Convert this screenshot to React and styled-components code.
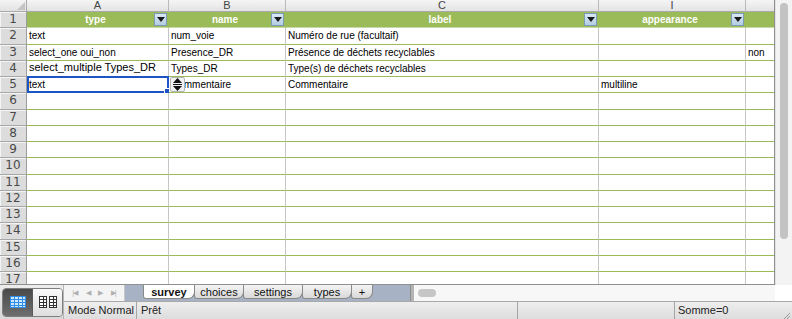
import React from 'react';
import styled, { createGlobalStyle } from 'styled-components';

const GlobalStyle = createGlobalStyle`
  html, body {
    margin: 0;
    padding: 0;
    background: #ffffff;
  }
  body {
    width: 792px;
    height: 319px;
    overflow: hidden;
    font-family: "Liberation Sans", Arial, sans-serif;
  }
`;

const columns = [
  { letter: 'A', title: 'type', filter: true },
  { letter: 'B', title: 'name', filter: true },
  { letter: 'C', title: 'label', filter: true },
  { letter: 'I', title: 'appearance', filter: true },
  { letter: '', title: '', filter: false },
];

const bodyRows = [
  ['text', 'num_voie', 'Numéro de rue (facultaif)', '', ''],
  ['select_one oui_non', 'Presence_DR', 'Présence de déchets recyclables', '', 'non'],
  ['select_multiple Types_DR', 'Types_DR', 'Type(s) de déchets recyclables', '', ''],
  ['text', 'Commentaire', 'Commentaire', 'multiline', ''],
];

const tabs = [
  { name: 'survey', width: 52, active: true },
  { name: 'choices', width: 50 },
  { name: 'settings', width: 60 },
  { name: 'types', width: 50 },
];

function FilterButton() {
  return (
    <Filter>
      <svg width="8" height="5" viewBox="0 0 8 5">
        <path d="M0 0 L8 0 L4 5 Z" fill="#1a1a1a" />
      </svg>
    </Filter>
  );
}

function ResizeHint() {
  return (
    <Hint>
      <svg width="11" height="13" viewBox="0 0 11 13">
        <path d="M5.5 0 L10 5 L1 5 Z" fill="#111" />
        <rect x="1" y="6" width="9" height="1" fill="#111" />
        <path d="M5.5 13 L10 8 L1 8 Z" fill="#111" />
      </svg>
    </Hint>
  );
}

function NormalViewIcon() {
  return (
    <svg width="16" height="12" viewBox="0 0 16 12">
      <rect x="0.5" y="0.5" width="15" height="11" fill="#cfe6ff" stroke="#2f8ee8" />
      {[3, 6, 9].map(y => <rect key={'h' + y} x="1" y={y} width="14" height="1" fill="#2f8ee8" />)}
      {[4, 8, 12].map(x => <rect key={'v' + x} x={x} y="1" width="1" height="10" fill="#2f8ee8" />)}
    </svg>
  );
}

function LayoutViewIcon() {
  return (
    <svg width="18" height="12" viewBox="0 0 18 12">
      {[0, 10].map(ox => (
        <g key={ox}>
          <rect x={ox + 0.5} y="0.5" width="7" height="11" fill="#fff" stroke="#333" />
          <rect x={ox + 4} y="1" width="1" height="10" fill="#333" />
          {[3, 6, 9].map(y => <rect key={y} x={ox + 1} y={y} width="6" height="1" fill="#333" />)}
        </g>
      ))}
    </svg>
  );
}

export default function App() {
  return (
    <>
      <GlobalStyle />
      <Window>
        <MainArea>
          <Sheet>
            <Corner />
            {columns.map((c, i) => (
              <ColHeader key={i}>{c.letter}</ColHeader>
            ))}

            <RowHeader>1</RowHeader>
            {columns.map((c, i) => (
              <TitleCell key={i}>
                <span>{c.title}</span>
                {c.filter && <FilterButton />}
              </TitleCell>
            ))}

            {bodyRows.map((row, r) => (
              <React.Fragment key={r}>
                <RowHeader>{r + 2}</RowHeader>
                {row.map((val, ci) => (
                  <Cell key={ci} $big={r === 2 && ci === 0}>
                    {val}
                    {r === 3 && ci === 0 && (
                      <Selection>
                        <Handle />
                      </Selection>
                    )}
                    {r === 3 && ci === 1 && <ResizeHint />}
                  </Cell>
                ))}
              </React.Fragment>
            ))}

            {Array.from({ length: 12 }, (_, k) => (
              <React.Fragment key={'e' + k}>
                <RowHeader>{k + 6}</RowHeader>
                {columns.map((c, ci) => (
                  <Cell key={ci} />
                ))}
              </React.Fragment>
            ))}
          </Sheet>
          <VScroll>
            <VThumb />
          </VScroll>
        </MainArea>

        <Bottom>
          <ViewSwitch>
            <ViewGroup>
              <ViewButton $pressed>
                <NormalViewIcon />
              </ViewButton>
              <ViewButton>
                <LayoutViewIcon />
              </ViewButton>
            </ViewGroup>
          </ViewSwitch>
          <BottomRight>
            <TabRow>
              <TabNav>
                <NavGlyph>|◀</NavGlyph>
                <NavGlyph>◀</NavGlyph>
                <NavGlyph>▶</NavGlyph>
                <NavGlyph>▶|</NavGlyph>
              </TabNav>
              <TabStrip>
                {tabs.map(t => (
                  <Tab key={t.name} $active={t.active} style={{ width: t.width }}>
                    {t.name}
                  </Tab>
                ))}
                <Tab style={{ width: 22 }}>+</Tab>
              </TabStrip>
              <TabSplitter />
              <HScroll>
                <HThumb />
              </HScroll>
              <ScrollCorner />
            </TabRow>
            <StatusBar>
              <StatusItem $w={73}>Mode Normal</StatusItem>
              <StatusItem $w={381}>Prêt</StatusItem>
              <StatusItem $w={157} />
              <StatusItem $w={117} $last>
                Somme=0
                <Grip>
                  <svg width="10" height="10" viewBox="0 0 10 10">
                    <path d="M9 2 L2 9 M9 5 L5 9 M9 8 L8 9" stroke="#9a9a9a" strokeWidth="1" />
                  </svg>
                </Grip>
              </StatusItem>
            </StatusBar>
          </BottomRight>
        </Bottom>
      </Window>
    </>
  );
}

const Window = styled.div`
  width: 792px;
  height: 319px;
  display: flex;
  flex-direction: column;
  background: #ffffff;
  overflow: hidden;
`;

const MainArea = styled.div`
  display: flex;
  height: 285px;
  flex-shrink: 0;
`;

const Sheet = styled.div`
  display: grid;
  grid-template-columns: 27px 142px 117px 313px 147px 29px;
  grid-template-rows: 12px repeat(17, 16.25px);
  width: 775px;
  height: 285px;
  border-right: 1px solid #8f8f8f;
  border-bottom: 1px solid #8f8f8f;
  box-sizing: border-box;
  overflow: hidden;
  font-size: 10px;
  color: #000;
`;

const Corner = styled.div`
  position: relative;
  background: linear-gradient(#f4f4f4, #e2e2e2);
  border-right: 1px solid #a9a9a9;
  border-bottom: 1px solid #a9a9a9;
  box-sizing: border-box;

  &::after {
    content: '';
    position: absolute;
    right: 1px;
    bottom: 1px;
    width: 0;
    height: 0;
    border-left: 8px solid transparent;
    border-bottom: 8px solid #c4c4c4;
  }
`;

const ColHeader = styled.div`
  background: linear-gradient(#f5f5f5, #e3e3e3);
  border-right: 1px solid #b9b9b9;
  border-bottom: 1px solid #a9a9a9;
  box-sizing: border-box;
  font-size: 11px;
  line-height: 11px;
  color: #444;
  text-align: center;
`;

const RowHeader = styled.div`
  background: #dcdcdc;
  border-right: 1px solid #9d9d9d;
  border-bottom: 1px solid #a7a7a7;
  box-shadow: inset 1px 1px 0 #f4f4f4;
  box-sizing: border-box;
  font-family: "DejaVu Sans", sans-serif;
  font-size: 12px;
  line-height: 15px;
  color: #4a4a4a;
  text-align: center;
`;

const TitleCell = styled.div`
  position: relative;
  display: flex;
  align-items: center;
  justify-content: center;
  background: #9bbb59;
  border-right: 1px solid #9bbb59;
  border-bottom: 1px solid #c8d9a8;
  box-sizing: border-box;
  font-weight: bold;
  font-size: 10px;
  color: #ffffff;
  padding-right: 4px;
`;

const Filter = styled.div`
  position: absolute;
  right: 1px;
  top: 1px;
  width: 13px;
  height: 13px;
  display: flex;
  align-items: center;
  justify-content: center;
  background: linear-gradient(#d9e8f5, #b4cde4);
  border: 1px solid #7b9ab8;
  box-sizing: border-box;
`;

const Cell = styled.div`
  position: relative;
  background: #ffffff;
  border-right: 1px solid #c6c6c6;
  border-bottom: 1px solid #9bbb59;
  box-sizing: border-box;
  padding: 0 2px;
  font-size: ${p => (p.$big ? '11px' : '10px')};
  line-height: ${p => (p.$big ? '13px' : '16px')};
  white-space: nowrap;
  overflow: visible;
`;

const Selection = styled.div`
  position: absolute;
  left: 0;
  top: -1px;
  right: -1px;
  bottom: -1px;
  border: 2px solid #1d55c4;
  pointer-events: none;
`;

const Handle = styled.div`
  position: absolute;
  right: -4px;
  bottom: -4px;
  width: 5px;
  height: 5px;
  background: #1d55c4;
  border: 1px solid #ffffff;
`;

const Hint = styled.div`
  position: absolute;
  left: 1px;
  top: 0;
  width: 15px;
  height: 15px;
  display: flex;
  align-items: center;
  justify-content: center;
  background: #f2f2f2;
  border: 1px solid #b5b5b5;
  border-radius: 2px;
  box-sizing: border-box;
`;

const VScroll = styled.div`
  width: 17px;
  height: 285px;
  background: #f3f3f3;
  border-left: 1px solid #e2e2e2;
  box-sizing: border-box;
  padding: 3px 0 0 4px;
`;

const VThumb = styled.div`
  width: 8px;
  height: 236px;
  border-radius: 4px;
  background: #c3c3c3;
`;

const Bottom = styled.div`
  display: flex;
  height: 34px;
  flex-shrink: 0;
`;

const ViewSwitch = styled.div`
  width: 64px;
  background: linear-gradient(#ececec, #d8d8d8);
  border-right: 1px solid #b4b4b4;
  box-sizing: border-box;
  display: flex;
  align-items: center;
  padding-left: 2px;
`;

const ViewGroup = styled.div`
  display: flex;
  height: 27px;
  border: 1px solid #7e7e7e;
  border-radius: 4px;
  overflow: hidden;
`;

const ViewButton = styled.div`
  width: 29px;
  display: flex;
  align-items: center;
  justify-content: center;
  background: ${p => (p.$pressed ? 'linear-gradient(#4a4a4a, #6e6e6e)' : 'linear-gradient(#fafafa, #dedede)')};
  border-right: ${p => (p.$pressed ? '1px solid #5a5a5a' : 'none')};
`;

const BottomRight = styled.div`
  flex: 1;
  display: flex;
  flex-direction: column;
`;

const TabRow = styled.div`
  display: flex;
  height: 16px;
`;

const TabNav = styled.div`
  width: 61px;
  display: flex;
  align-items: center;
  justify-content: space-around;
  padding: 0 4px;
  box-sizing: border-box;
  background: #f4f4f4;
  border-right: 1px solid #c9c9c9;
`;

const NavGlyph = styled.span`
  font-size: 7px;
  color: #b0b0b0;
  letter-spacing: -1px;
`;

const TabStrip = styled.div`
  width: 285px;
  display: flex;
  align-items: flex-start;
  padding-left: 18px;
  box-sizing: border-box;
  background: #a7b3c4;
`;

const Tab = styled.div`
  height: 14px;
  box-sizing: border-box;
  display: flex;
  align-items: center;
  justify-content: center;
  font-size: 11px;
  font-weight: ${p => (p.$active ? 'bold' : 'normal')};
  color: #111;
  background: ${p => (p.$active ? '#ffffff' : 'linear-gradient(#f4f4f4, #d9d9d9)')};
  border: 1px solid #8a8a8a;
  border-top: none;
  border-radius: 0 0 7px 3px;
  margin-right: -1px;
`;

const TabSplitter = styled.div`
  width: 3px;
  background: #b4b4b4;
  border-left: 1px solid #8e8e8e;
`;

const HScroll = styled.div`
  flex: 1;
  background: #f7f7f7;
  display: flex;
  align-items: center;
  padding-left: 4px;
`;

const HThumb = styled.div`
  width: 18px;
  height: 8px;
  border-radius: 4px;
  background: #c6c6c6;
`;

const ScrollCorner = styled.div`
  width: 17px;
  background: #ffffff;
`;

const StatusBar = styled.div`
  display: flex;
  height: 18px;
  background: linear-gradient(#eeeeee, #dddddd);
  border-top: 1px solid #a9a9a9;
  box-sizing: border-box;
`;

const StatusItem = styled.div`
  position: relative;
  width: ${p => p.$w}px;
  box-sizing: border-box;
  padding-left: ${p => (p.$last ? '3px' : '4px')};
  border-right: ${p => (p.$last ? 'none' : '1px solid #a5a5a5')};
  font-size: 11px;
  line-height: 17px;
  white-space: nowrap;
  color: #222;
`;

const Grip = styled.div`
  position: absolute;
  right: 1px;
  bottom: 0;
  width: 10px;
  height: 10px;
`;
